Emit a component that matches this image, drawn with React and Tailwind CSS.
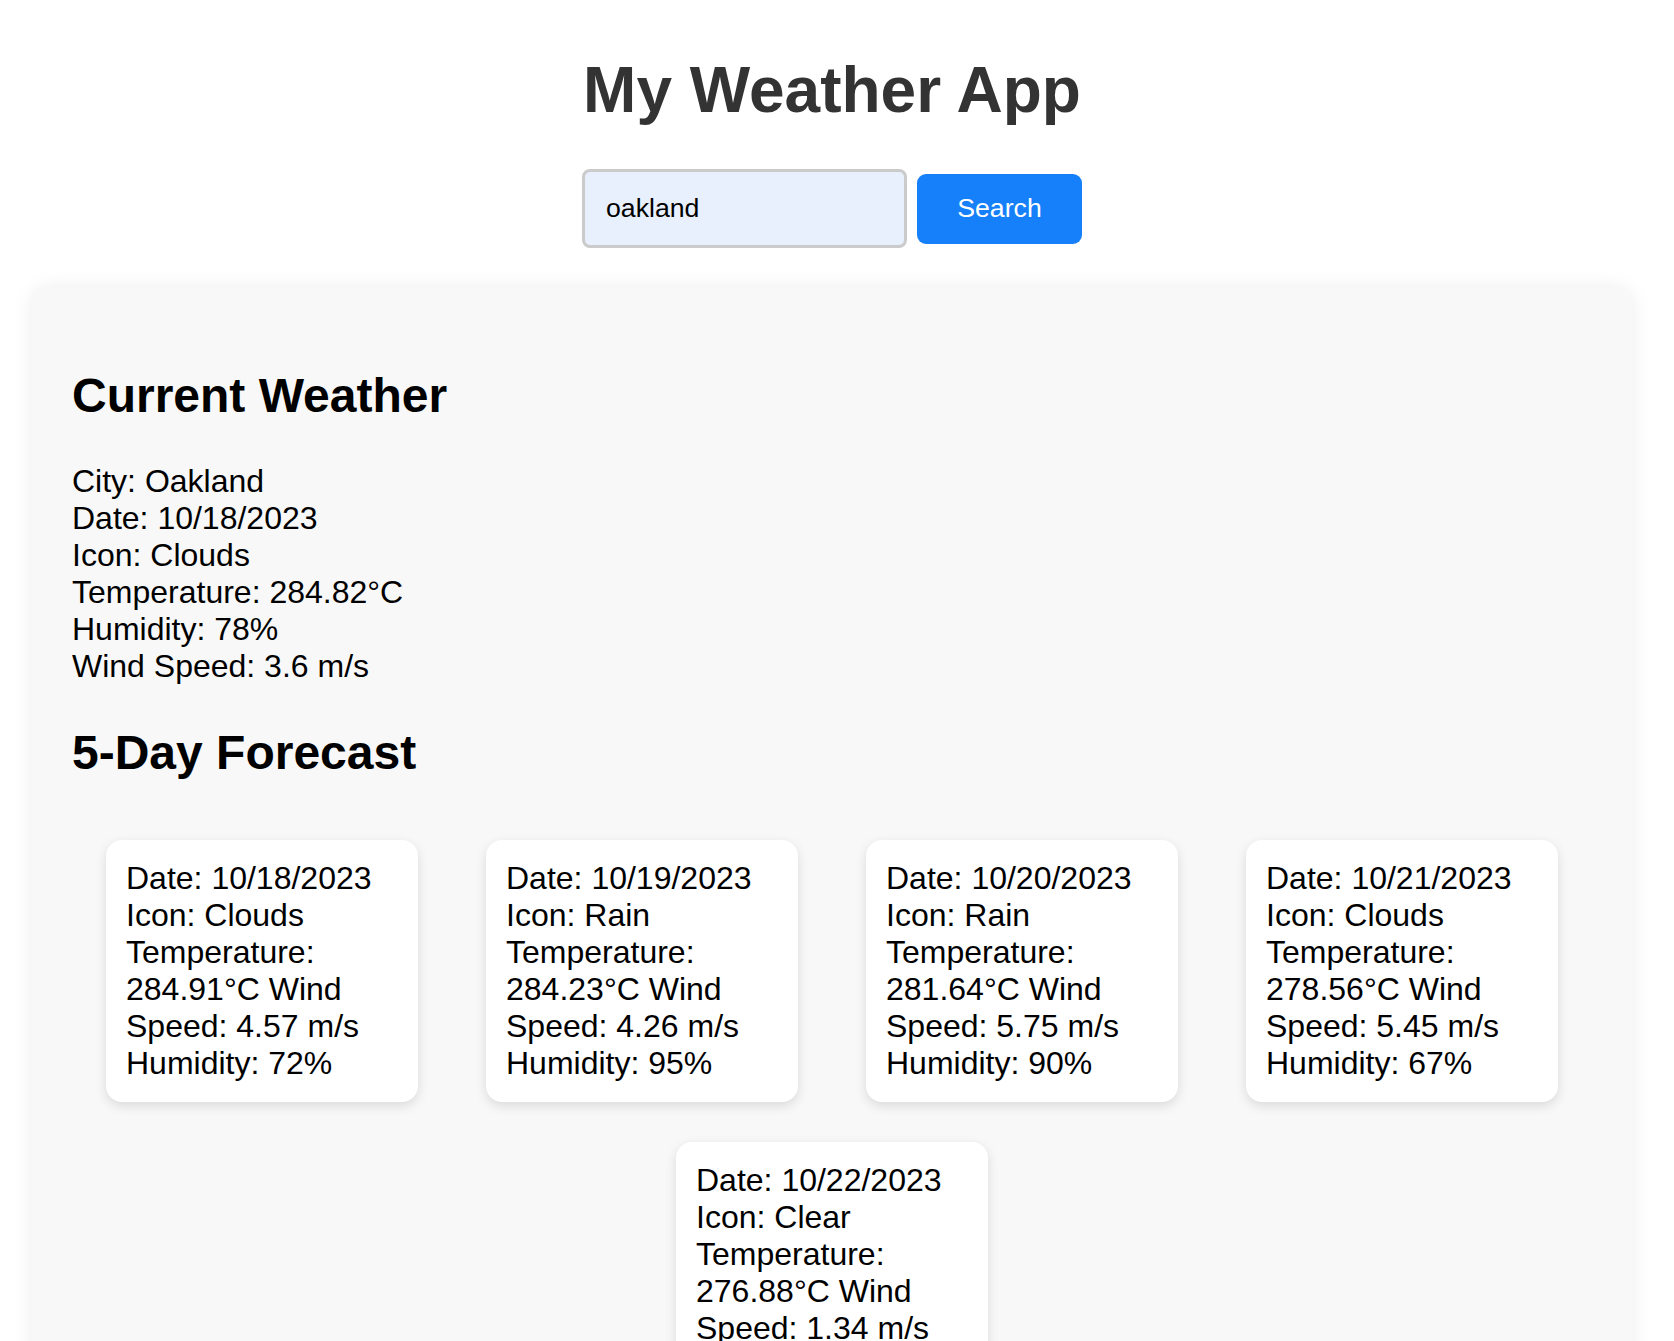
import React from 'react';

const current = {
  city: 'Oakland',
  date: '10/18/2023',
  icon: 'Clouds',
  temp: '284.82',
  humidity: '78',
  wind: '3.6',
};

const forecast = [
  { date: '10/18/2023', icon: 'Clouds', temp: '284.91', wind: '4.57', humidity: '72' },
  { date: '10/19/2023', icon: 'Rain', temp: '284.23', wind: '4.26', humidity: '95' },
  { date: '10/20/2023', icon: 'Rain', temp: '281.64', wind: '5.75', humidity: '90' },
  { date: '10/21/2023', icon: 'Clouds', temp: '278.56', wind: '5.45', humidity: '67' },
  { date: '10/22/2023', icon: 'Clear', temp: '276.88', wind: '1.34', humidity: '64' },
];

const ForecastCard = ({ day }) => (
  <div className="w-[312px] mx-[34px] my-[20px] bg-white rounded-[16px] p-[20px] shadow-[0_4px_12px_rgba(0,0,0,0.12)]">
    <p>
      Date: {day.date}
      <br />
      Icon: {day.icon}
      <br />
      Temperature: {day.temp}°C Wind Speed: {day.wind} m/s
      <br />
      Humidity: {day.humidity}%
    </p>
  </div>
);

export default function App() {
  return (
    <div className="min-h-[1341px] bg-white text-black font-['Liberation_Sans',Arial,sans-serif] text-[32px] leading-[normal] overflow-hidden">
      <div className="w-[1664px] px-8">
        {/* Header */}
        <h1 className="text-center text-[64px] font-bold text-[#333] pt-[53px] pb-[42px]">
          My Weather App
        </h1>

        {/* Search bar */}
        <div className="flex items-center justify-center gap-[10px]">
          <input
            type="text"
            defaultValue="oakland"
            className="w-[325px] h-[79px] px-[21px] text-[26.67px] bg-[#e8f0fe] border-[3px] border-[#cbcbcb] rounded-[8px] outline-none text-black"
          />
          <button className="w-[165px] h-[70px] bg-[#1680fa] text-white text-[26.67px] rounded-[9px]">
            Search
          </button>
        </div>

        {/* Weather panel */}
        <div className="mt-[40px] bg-[#f8f8f8] rounded-[16px] p-[40px] shadow-[0_0_20px_rgba(0,0,0,0.08)]">
          <h2 className="text-[48px] font-bold mt-[40px] mb-[40px]">Current Weather</h2>
          <div>
            <p>City: {current.city}</p>
            <p>Date: {current.date}</p>
            <p>Icon: {current.icon}</p>
            <p>Temperature: {current.temp}°C</p>
            <p>Humidity: {current.humidity}%</p>
            <p>Wind Speed: {current.wind} m/s</p>
          </div>

          <h2 className="text-[48px] font-bold mt-[40px] mb-[40px]">5-Day Forecast</h2>
          <div className="flex flex-wrap justify-center">
            {forecast.map((day) => (
              <ForecastCard key={day.date} day={day} />
            ))}
          </div>
        </div>
      </div>
    </div>
  );
}
